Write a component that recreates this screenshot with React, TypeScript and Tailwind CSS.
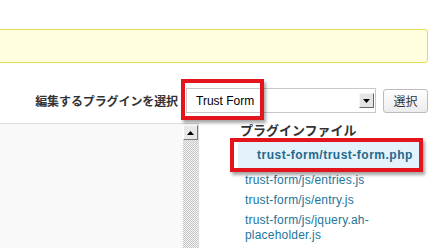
import React from 'react';

const otherFiles = [
  'trust-form/js/entries.js',
  'trust-form/js/entry.js',
  'trust-form/js/jquery.ah-placeholder.js',
];

const jp = "font-['Noto_Sans_CJK_JP',sans-serif]";
const latin = "font-['Liberation_Sans','Noto_Sans_CJK_JP',sans-serif]";

// red annotation frame drawn over a control
const Mark: React.FC<{ className: string }> = ({ className }) => (
  <span
    className={`pointer-events-none absolute border-4 border-[#e3141c] shadow-[2px_3px_3px_rgba(0,0,0,0.35)] ${className}`}
  />
);

const App: React.FC = () => {
  return (
    <div className="w-[435px] h-[248px] overflow-hidden bg-white text-[#333]">
      {/* notice box */}
      <div className="mt-[29px] -ml-[4px] w-[432px] h-[34px] bg-[#ffffe0] border border-[#e6db55] rounded-[3px]" />

      {/* plugin select row */}
      <div className="mt-[25px] flex items-center justify-end pr-[7px] h-[25px]">
        <span className={`${jp} text-[12px] font-bold tracking-[-0.1px]`}>編集するプラグインを選択</span>
        <div className="relative ml-[8px] w-[190px] h-[25px] bg-white border border-[#c8c8c8] flex items-center">
          <span className={`${latin} text-[12px] text-black pl-[9px]`}>Trust Form</span>
          <span className="ml-auto mr-[1px] w-[15px] h-[15px] bg-[#e4e4e4] border border-t-[#f4f4f4] border-l-[#f4f4f4] border-r-[#666] border-b-[#666] flex items-center justify-center">
            <svg width="7" height="4" viewBox="0 0 7 4">
              <path d="M0 0h7L3.5 4z" fill="#000" />
            </svg>
          </span>
          <Mark className="-left-[6px] -top-[10px] w-[83px] h-[41px]" />
        </div>
        <button
          className={`${jp} ml-[7px] w-[45px] h-[24px] rounded-[3px] border border-[#bbb] bg-gradient-to-b from-white to-[#ececec] text-[12px] text-[#333] flex items-center justify-center`}
        >
          選択
        </button>
      </div>

      {/* editor + file list */}
      <div className="mt-[10px] flex">
        <div className="w-[199px] h-[125px] border-t border-r border-[#dcdcdc] bg-[#f9f9f9] flex justify-end">
          <div className="w-[15px] mt-[1px] flex flex-col">
            <div className="h-[15px] bg-[#e8e8e8] border border-t-white border-l-white border-r-[#777] border-b-[#777] flex items-center justify-center">
              <svg width="7" height="4" viewBox="0 0 7 4">
                <path d="M3.5 0L7 4H0z" fill="#000" />
              </svg>
            </div>
            <div className="flex-1 bg-[image:repeating-conic-gradient(#c4c4c4_0_25%,#f6f6f6_0_50%)] bg-[length:2px_2px]" />
          </div>
        </div>

        <div className="ml-[35px] w-[185px]">
          <h3 className={`${jp} ml-[6px] -mt-[1px] text-[13px] leading-[16px] font-bold text-[#333]`}>プラグインファイル</h3>
          <ul className={`${latin} mt-[4px] text-[12px] tracking-[0.2px] text-[#21759b]`}>
            <li className="relative h-[26px] bg-[#e4f2fc] border-l-[4px] border-white flex items-center pl-[19px]">
              <span className="font-bold tracking-[0.5px] text-[#1e6a8d]">trust-form/trust-form.php</span>
              <Mark className="-left-[8px] -top-[4px] -right-[4px] -bottom-[4px]" />
            </li>
            {otherFiles.map((f) => (
              <li key={f} className="pl-[11px] pr-[4px] mt-[5px] leading-[15px]">
                {f}
              </li>
            ))}
          </ul>
        </div>
      </div>
    </div>
  );
};

export default App;
